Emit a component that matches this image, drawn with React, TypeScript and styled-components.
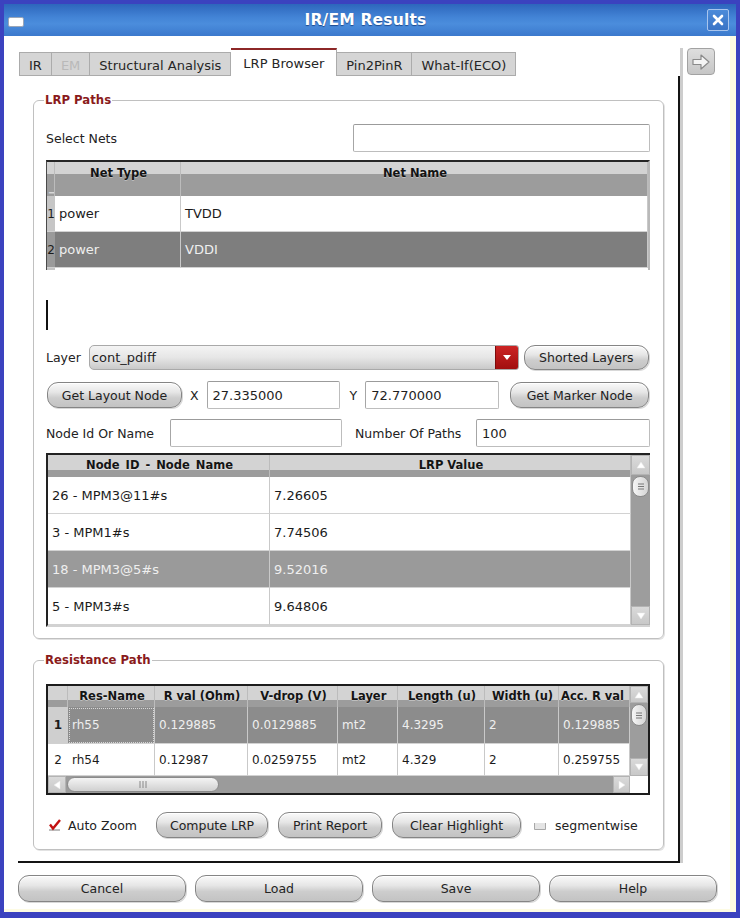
import React from 'react';
import styled, { createGlobalStyle, css } from 'styled-components';

const GlobalStyle = createGlobalStyle`
  html, body {
    margin: 0;
    padding: 0;
    background: #ffffff;
  }
  body {
    font-family: "DejaVu Sans", "Liberation Sans", sans-serif;
    font-size: 13px;
    color: #1e1e1e;
  }
  * {
    box-sizing: border-box;
  }
`;

const Window = styled.div`
  width: 740px;
  height: 918px;
  border: 4px solid #3b42bf;
  border-bottom-width: 6px;
  display: flex;
  flex-direction: column;
  background: #ffffff;
  overflow: hidden;
`;

const TitleBar = styled.div`
  height: 32px;
  flex: none;
  display: flex;
  align-items: center;
  padding: 0 7px 0 4px;
  background: linear-gradient(#2d66bc 0%, #4384d6 42%, #4b8ddc 62%, #3b79cd 100%);
`;

const WindowIcon = styled.div`
  width: 16px;
  height: 10px;
  margin-top: 3px;
  background: #ffffff;
  border: 1px solid #9aa6b8;
  border-radius: 2px;
`;

const Title = styled.div`
  flex: 1;
  text-align: center;
  color: #ffffff;
  font-weight: bold;
  font-size: 15.5px;
  letter-spacing: 0.2px;
  text-shadow: 0 1px 1px #1d4a8e;
`;

const CloseButton = styled.div`
  width: 22px;
  height: 22px;
  display: flex;
  align-items: center;
  justify-content: center;
  border: 1px solid #a8c5ee;
  border-radius: 2px;
  background: linear-gradient(#4c8bd9, #3a74c6);
`;

const Body = styled.div`
  flex: 1;
  display: flex;
  flex-direction: column;
  padding: 12px 8px 0 14px;
  border-right: 6px solid #fdfbe3;
  border-bottom: 3px solid #fdfbe3;
`;

const MainRow = styled.div`
  display: flex;
`;

const TabWidget = styled.div`
  width: 662px;
  flex: none;
  display: flex;
  flex-direction: column;
`;

const TabBar = styled.div`
  height: 28px;
  display: flex;
  align-items: flex-end;
  padding-left: 1px;
`;

const Tab = styled.div<{ $active?: boolean; $disabled?: boolean }>`
  height: 24px;
  padding: 3px 9px 0;
  display: flex;
  align-items: center;
  background: #d5d5d5;
  border: 1px solid #ababab;
  border-left-width: 0;
  font-size: 13px;
  color: ${(p) => (p.$disabled ? '#b9b9b9' : '#262626')};
  &:first-child {
    border-left-width: 1px;
  }
  ${(p) =>
    p.$active &&
    css`
      height: 28px;
      padding: 0 12px;
      background: #ffffff;
      border-top: 2px solid #8d2727;
      border-bottom: none;
    `}
`;

const TabPanel = styled.div`
  border-right: 2px solid #141414;
  border-bottom: 2px solid #141414;
  padding: 17px 14px 11px 15px;
`;

const SideColumn = styled.div`
  flex: 1;
  border-left: 3px solid #cdcdcd;
  padding-left: 4px;
`;

const SideButton = styled.div`
  width: 28px;
  height: 27px;
  display: flex;
  align-items: center;
  justify-content: center;
  border: 1px solid #a2a2a2;
  border-radius: 4px;
  background: linear-gradient(#dedede, #c6c6c6);
`;

const GroupBox = styled.fieldset<{ $mt?: number }>`
  margin: ${(p) => p.$mt ?? 0}px 0 0 0;
  padding: 17px 13px 11px 12px;
  min-width: 0;
  border: 1px solid #c0c0c0;
  border-radius: 6px;
  box-shadow: 1px 1px 0 #e2e2e2;
  display: flex;
  flex-direction: column;
`;

const Legend = styled.legend`
  margin-left: -2px;
  padding: 0 1px;
  font-size: 11.7px;
  line-height: 14px;
  font-weight: bold;
  color: #8a1b1b;
`;

const Row = styled.div<{ $mt?: number; $h?: number }>`
  display: flex;
  align-items: center;
  height: ${(p) => p.$h ?? 26}px;
  margin-top: ${(p) => p.$mt ?? 0}px;
  flex: none;
`;

const Label = styled.span<{ $ml?: number; $w?: number }>`
  font-size: 12.5px;
  color: #222222;
  white-space: nowrap;
  margin-left: ${(p) => p.$ml ?? 0}px;
  ${(p) =>
    p.$w &&
    css`
      width: ${p.$w}px;
      flex: none;
    `}
`;

const TextInput = styled.input<{ $w: number; $ml?: number }>`
  width: ${(p) => p.$w}px;
  height: 28px;
  margin: 0 0 0 ${(p) => p.$ml ?? 0}px;
  padding: 0 5px;
  flex: none;
  border: 1px solid #bdbdbd;
  border-top-color: #9b9b9b;
  border-left-color: #a6a6a6;
  border-radius: 2px;
  background: #ffffff;
  font-family: inherit;
  font-size: 13px;
  color: #1e1e1e;
  outline: none;
`;

const Button = styled.button<{ $w: number; $ml?: number; $h?: number }>`
  width: ${(p) => p.$w}px;
  height: ${(p) => p.$h ?? 26}px;
  margin-left: ${(p) => p.$ml ?? 0}px;
  flex: none;
  padding: 0;
  border: 1px solid #858585;
  border-radius: 11px;
  background: linear-gradient(#fafafa 0%, #e6e6e6 38%, #cdcdcd 62%, #c3c3c3 100%);
  box-shadow: inset 0 1px 0 #ffffff, 1px 1px 0 #d8d8d8;
  font-family: inherit;
  font-size: 12.5px;
  color: #232323;
  white-space: nowrap;
`;

const Combo = styled.div`
  width: 430px;
  height: 25px;
  margin-left: 8px;
  flex: none;
  display: flex;
  border: 1px solid #a9a9a9;
  border-radius: 5px 3px 3px 5px;
  overflow: hidden;
  background: linear-gradient(#f4f4f4 0%, #e6e6e6 50%, #c9c9c9 100%);
`;

const ComboText = styled.div`
  flex: 1;
  display: flex;
  align-items: center;
  padding-left: 2px;
  font-size: 13px;
`;

const ComboArrow = styled.div`
  width: 23px;
  display: flex;
  align-items: center;
  justify-content: center;
  border-left: 1px solid #7c0b0b;
  background: linear-gradient(#cc2424, #a10f0f);
`;

const CursorArea = styled.div`
  height: 75px;
  padding-top: 30px;
  flex: none;
`;

const Caret = styled.div`
  width: 2px;
  height: 30px;
  background: #111111;
`;

/* ---- net table ---- */

const NetTable = styled.div`
  margin-top: 8px;
  display: grid;
  grid-template-columns: 8px 126px 1fr;
  grid-template-rows: 34px 36px 36px 2px;
  border-top: 2px solid #262626;
  border-left: 1px solid #4a4a4a;
  border-right: 2px solid #b9b9b9;
  flex: none;
`;

const HeadCell = styled.div<{ $split: number; $align?: string; $pt?: number }>`
  padding-top: ${(p) => p.$pt ?? 5}px;
  padding-left: 2px;
  background: linear-gradient(#d3d3d3 0, #d3d3d3 ${(p) => p.$split}px, #9c9c9c ${(p) => p.$split}px);
  border-right: 1px solid #bcbcbc;
  font-size: 11.5px;
  line-height: 13px;
  font-weight: bold;
  color: #141414;
  text-align: ${(p) => p.$align ?? 'center'};
  text-shadow: 0 1px 0 rgba(255, 255, 255, 0.35);
  white-space: nowrap;
  overflow: hidden;
`;

const RowHead = styled.div<{ $bg: string; $bold?: boolean }>`
  display: flex;
  align-items: center;
  justify-content: center;
  background: ${(p) => p.$bg};
  font-size: 12px;
  font-weight: ${(p) => (p.$bold ? 'bold' : 'normal')};
  color: #1b1b1b;
  overflow: hidden;
  border-bottom: 1px solid #d0d0d0;
`;

const Cell = styled.div<{ $sel?: boolean; $size?: number; $focus?: boolean }>`
  display: flex;
  align-items: center;
  padding-left: 4px;
  background: ${(p) => (p.$sel ? '#8c8c8c' : '#ffffff')};
  color: ${(p) => (p.$sel ? '#efefef' : '#1b1b1b')};
  font-size: ${(p) => p.$size ?? 13}px;
  border-right: 1px solid #c9c9c9;
  border-bottom: 1px solid #d2d2d2;
  white-space: nowrap;
  overflow: hidden;
  ${(p) =>
    p.$focus &&
    css`
      outline: 1px dotted #d8d8d8;
      outline-offset: -2px;
    `}
`;

const Filler = styled.div<{ $bg: string }>`
  background: ${(p) => p.$bg};
`;

/* ---- node table ---- */

const NodeTable = styled.div`
  margin-top: 6px;
  height: 174px;
  display: flex;
  flex: none;
  border-top: 2px solid #222222;
  border-left: 2px solid #222222;
  border-bottom: 2px solid #d2d2d2;
`;

const NodeGrid = styled.div`
  flex: 1;
  display: grid;
  grid-template-columns: 222px 1fr;
  grid-template-rows: 22px repeat(4, 37px);
`;

/* ---- scrollbars ---- */

const VScroll = styled.div<{ $w: number }>`
  width: ${(p) => p.$w}px;
  flex: none;
  display: flex;
  flex-direction: column;
  background: #9d9d9d;
`;

const HScroll = styled.div`
  height: 17px;
  flex: none;
  display: flex;
  background: #9b9b9b;
`;

const ArrowButton = styled.div<{ $w?: number; $h?: number }>`
  width: ${(p) => (p.$w ? `${p.$w}px` : 'auto')};
  height: ${(p) => (p.$h ? `${p.$h}px` : 'auto')};
  flex: none;
  display: flex;
  align-items: center;
  justify-content: center;
  background: linear-gradient(#dadada, #c8c8c8);
  border: 1px solid #b3b3b3;
`;

const VThumb = styled.div<{ $h: number }>`
  height: ${(p) => p.$h}px;
  margin: 1px 1px 0;
  flex: none;
  display: flex;
  align-items: center;
  justify-content: center;
  border: 1px solid #8b8b8b;
  border-radius: 8px;
  background: linear-gradient(90deg, #f6f6f6, #d4d4d4);
`;

const HThumb = styled.div<{ $w: number }>`
  width: ${(p) => p.$w}px;
  margin: 1px 0 1px 1px;
  flex: none;
  display: flex;
  align-items: center;
  justify-content: center;
  border: 1px solid #8b8b8b;
  border-radius: 8px;
  background: linear-gradient(#f4f4f4, #d0d0d0);
`;

const Track = styled.div`
  flex: 1;
`;

const Corner = styled.div`
  width: 18px;
  flex: none;
  background: #ffffff;
`;

/* ---- resistance table ---- */

const ResTable = styled.div`
  height: 111px;
  flex: none;
  display: flex;
  flex-direction: column;
  border: 2px solid #1c1c1c;
`;

const ResMain = styled.div`
  flex: 1;
  display: flex;
  min-height: 0;
`;

const ResGrid = styled.div`
  flex: 1;
  display: grid;
  grid-template-columns: 20px 87px 93px 90px 60px 87px 74px 1fr;
  grid-template-rows: 21px 37px 1fr;
  overflow: hidden;
`;

const CheckBox = styled.span<{ $ml?: number }>`
  display: inline-flex;
  margin-left: ${(p) => p.$ml ?? 0}px;
  flex: none;
`;

const Footer = styled.div`
  margin-top: 12px;
  display: flex;
  gap: 9px;
`;

function Tri({ dir }: { dir: 'up' | 'down' | 'left' | 'right' }) {
  const pts = {
    up: '1,7 5,1 9,7',
    down: '1,1 5,7 9,1',
    left: '7,1 1,5 7,9',
    right: '1,1 7,5 1,9',
  }[dir];
  const w = dir === 'up' || dir === 'down' ? 10 : 8;
  const h = dir === 'up' || dir === 'down' ? 8 : 10;
  return (
    <svg width={w} height={h} viewBox={`0 0 ${w} ${h}`}>
      <polygon points={pts} fill="#ffffff" stroke="#e8e8e8" strokeWidth="0.5" />
    </svg>
  );
}

function GripH() {
  return (
    <svg width="8" height="7" viewBox="0 0 8 7">
      <path d="M1 1h6M1 3.5h6M1 6h6" stroke="#777" strokeWidth="1" />
    </svg>
  );
}

function GripV() {
  return (
    <svg width="8" height="7" viewBox="0 0 8 7">
      <path d="M1 0v7M4 0v7M7 0v7" stroke="#888" strokeWidth="1" />
    </svg>
  );
}

const nodeRows = [
  ['26 - MPM3@11#s', '7.26605'],
  ['3 - MPM1#s', '7.74506'],
  ['18 - MPM3@5#s', '9.52016'],
  ['5 - MPM3#s', '9.64806'],
];

const resHeaders = ['Res-Name', 'R val (Ohm)', 'V-drop (V)', 'Layer', 'Length (u)', 'Width (u)', 'Acc. R val'];
const resRows = [
  ['rh55', '0.129885', '0.0129885', 'mt2', '4.3295', '2', '0.129885'],
  ['rh54', '0.12987', '0.0259755', 'mt2', '4.329', '2', '0.259755'],
];

export default function App() {
  return (
    <>
      <GlobalStyle />
      <Window>
        <TitleBar>
          <WindowIcon />
          <Title>IR/EM Results</Title>
          <CloseButton>
            <svg width="12" height="12" viewBox="0 0 12 12">
              <path d="M2 2L10 10M10 2L2 10" stroke="#ffffff" strokeWidth="2.6" strokeLinecap="round" />
            </svg>
          </CloseButton>
        </TitleBar>

        <Body>
          <MainRow>
            <TabWidget>
              <TabBar>
                <Tab>IR</Tab>
                <Tab $disabled>EM</Tab>
                <Tab>Structural Analysis</Tab>
                <Tab $active>LRP Browser</Tab>
                <Tab>Pin2PinR</Tab>
                <Tab>What-If(ECO)</Tab>
              </TabBar>

              <TabPanel>
                <GroupBox>
                  <Legend>LRP Paths</Legend>
                  <Row $h={28}>
                    <Label $w={307}>Select Nets</Label>
                    <TextInput $w={297} defaultValue="" />
                  </Row>

                  <NetTable>
                    <HeadCell $split={12} $align="left" $pt={18}>
                      <span style={{ color: '#dcdcdc', fontWeight: 'normal' }}>_</span>
                    </HeadCell>
                    <HeadCell $split={12}>Net Type</HeadCell>
                    <HeadCell $split={12}>Net Name</HeadCell>

                    <RowHead $bg="#c6c6c6">1</RowHead>
                    <Cell>power</Cell>
                    <Cell>TVDD</Cell>

                    <RowHead $bg="#9a9a9a">2</RowHead>
                    <Cell $sel style={{ background: '#7e7e7e' }}>power</Cell>
                    <Cell $sel style={{ background: '#7e7e7e' }}>VDDI</Cell>

                    <Filler $bg="#c4c4c4" />
                    <Filler $bg="#ffffff" />
                    <Filler $bg="#ffffff" />
                  </NetTable>

                  <CursorArea>
                    <Caret />
                  </CursorArea>

                  <Row $h={25}>
                    <Label>Layer</Label>
                    <Combo>
                      <ComboText>cont_pdiff</ComboText>
                      <ComboArrow>
                        <svg width="8" height="5" viewBox="0 0 8 5">
                          <polygon points="0,0 8,0 4,5" fill="#ffffff" />
                        </svg>
                      </ComboArrow>
                    </Combo>
                    <Button $w={125} $ml={5} $h={25}>
                      Shorted Layers
                    </Button>
                  </Row>

                  <Row $mt={12} $h={26}>
                    <Button $w={135} $ml={1}>
                      Get Layout Node
                    </Button>
                    <Label $ml={8}>X</Label>
                    <TextInput $w={133} $ml={8} defaultValue="27.335000" />
                    <Label $ml={10}>Y</Label>
                    <TextInput $w={134} $ml={8} defaultValue="72.770000" />
                    <Button $w={139} $ml={11}>
                      Get Marker Node
                    </Button>
                  </Row>

                  <Row $mt={11} $h={28}>
                    <Label $w={124}>Node Id Or Name</Label>
                    <TextInput $w={172} defaultValue="" />
                    <Label $ml={13} $w={121}>
                      Number Of Paths
                    </Label>
                    <TextInput $w={174} defaultValue="100" />
                  </Row>

                  <NodeTable>
                    <NodeGrid>
                      <HeadCell $split={15} $pt={4} style={{ wordSpacing: '2px' }}>
                        Node ID - Node Name
                      </HeadCell>
                      <HeadCell $split={15} $pt={4}>
                        LRP Value
                      </HeadCell>
                      {nodeRows.map(([name, value], i) => (
                        <React.Fragment key={name}>
                          <Cell $sel={i === 2} style={i === 2 ? { background: '#9a9a9a' } : undefined}>
                            {name}
                          </Cell>
                          <Cell $sel={i === 2} style={i === 2 ? { background: '#9a9a9a' } : undefined}>
                            {value}
                          </Cell>
                        </React.Fragment>
                      ))}
                    </NodeGrid>
                    <VScroll $w={19}>
                      <ArrowButton $h={20}>
                        <Tri dir="up" />
                      </ArrowButton>
                      <VThumb $h={21}>
                        <GripH />
                      </VThumb>
                      <Track />
                      <ArrowButton $h={19}>
                        <Tri dir="down" />
                      </ArrowButton>
                    </VScroll>
                  </NodeTable>
                </GroupBox>

                <GroupBox $mt={14}>
                  <Legend>Resistance Path</Legend>
                  <ResTable>
                    <ResMain>
                      <ResGrid>
                        <HeadCell $split={14} $pt={4} />
                        {resHeaders.map((h, i) => (
                          <HeadCell
                            key={h}
                            $split={14}
                            $pt={4}
                            $align={i === resHeaders.length - 1 ? 'left' : 'center'}
                          >
                            {h}
                          </HeadCell>
                        ))}
                        {resRows.map((row, r) => (
                          <React.Fragment key={row[0]}>
                            <RowHead $bg={r === 0 ? '#cfcfcf' : '#ffffff'} $bold={r === 0}>
                              {r + 1}
                            </RowHead>
                            {row.map((v, c) => (
                              <Cell key={c} $sel={r === 0} $size={12} $focus={r === 0 && c === 0}>
                                {v}
                              </Cell>
                            ))}
                          </React.Fragment>
                        ))}
                      </ResGrid>
                      <VScroll $w={18}>
                        <ArrowButton $h={17}>
                          <Tri dir="up" />
                        </ArrowButton>
                        <VThumb $h={22}>
                          <GripH />
                        </VThumb>
                        <Track />
                        <ArrowButton $h={18}>
                          <Tri dir="down" />
                        </ArrowButton>
                      </VScroll>
                    </ResMain>
                    <HScroll>
                      <ArrowButton $w={18}>
                        <Tri dir="left" />
                      </ArrowButton>
                      <HThumb $w={152}>
                        <GripV />
                      </HThumb>
                      <Track />
                      <ArrowButton $w={17}>
                        <Tri dir="right" />
                      </ArrowButton>
                      <Corner />
                    </HScroll>
                  </ResTable>

                  <Row $mt={17} $h={26}>
                    <CheckBox $ml={2}>
                      <svg width="14" height="14" viewBox="0 0 14 14">
                        <rect x="1" y="11" width="11" height="2" fill="#bdbdbd" />
                        <path d="M2 6.5L5 10.5L12 2" fill="none" stroke="#c21111" strokeWidth="2.4" />
                      </svg>
                    </CheckBox>
                    <Label $ml={6}>Auto Zoom</Label>
                    <Button $w={112} $ml={19}>
                      Compute LRP
                    </Button>
                    <Button $w={104} $ml={10}>
                      Print Report
                    </Button>
                    <Button $w={129} $ml={10}>
                      Clear Highlight
                    </Button>
                    <CheckBox $ml={13}>
                      <svg width="12" height="10" viewBox="0 0 12 10">
                        <path d="M0.5 3V9.5H11.5V3" fill="#e4e4e4" stroke="#a8a8a8" strokeWidth="1" />
                      </svg>
                    </CheckBox>
                    <Label $ml={9}>segmentwise</Label>
                  </Row>
                </GroupBox>
              </TabPanel>
            </TabWidget>

            <SideColumn>
              <SideButton>
                <svg width="20" height="18" viewBox="0 0 20 18">
                  <path
                    d="M2 6.5H10V2L18 9L10 16V11.5H2Z"
                    fill="#f4f4f4"
                    stroke="#8a8a8a"
                    strokeWidth="1.2"
                    strokeLinejoin="round"
                  />
                </svg>
              </SideButton>
            </SideColumn>
          </MainRow>

          <Footer>
            <Button $w={168} $h={27}>
              Cancel
            </Button>
            <Button $w={168} $h={27}>
              Load
            </Button>
            <Button $w={168} $h={27}>
              Save
            </Button>
            <Button $w={168} $h={27}>
              Help
            </Button>
          </Footer>
        </Body>
      </Window>
    </>
  );
}
